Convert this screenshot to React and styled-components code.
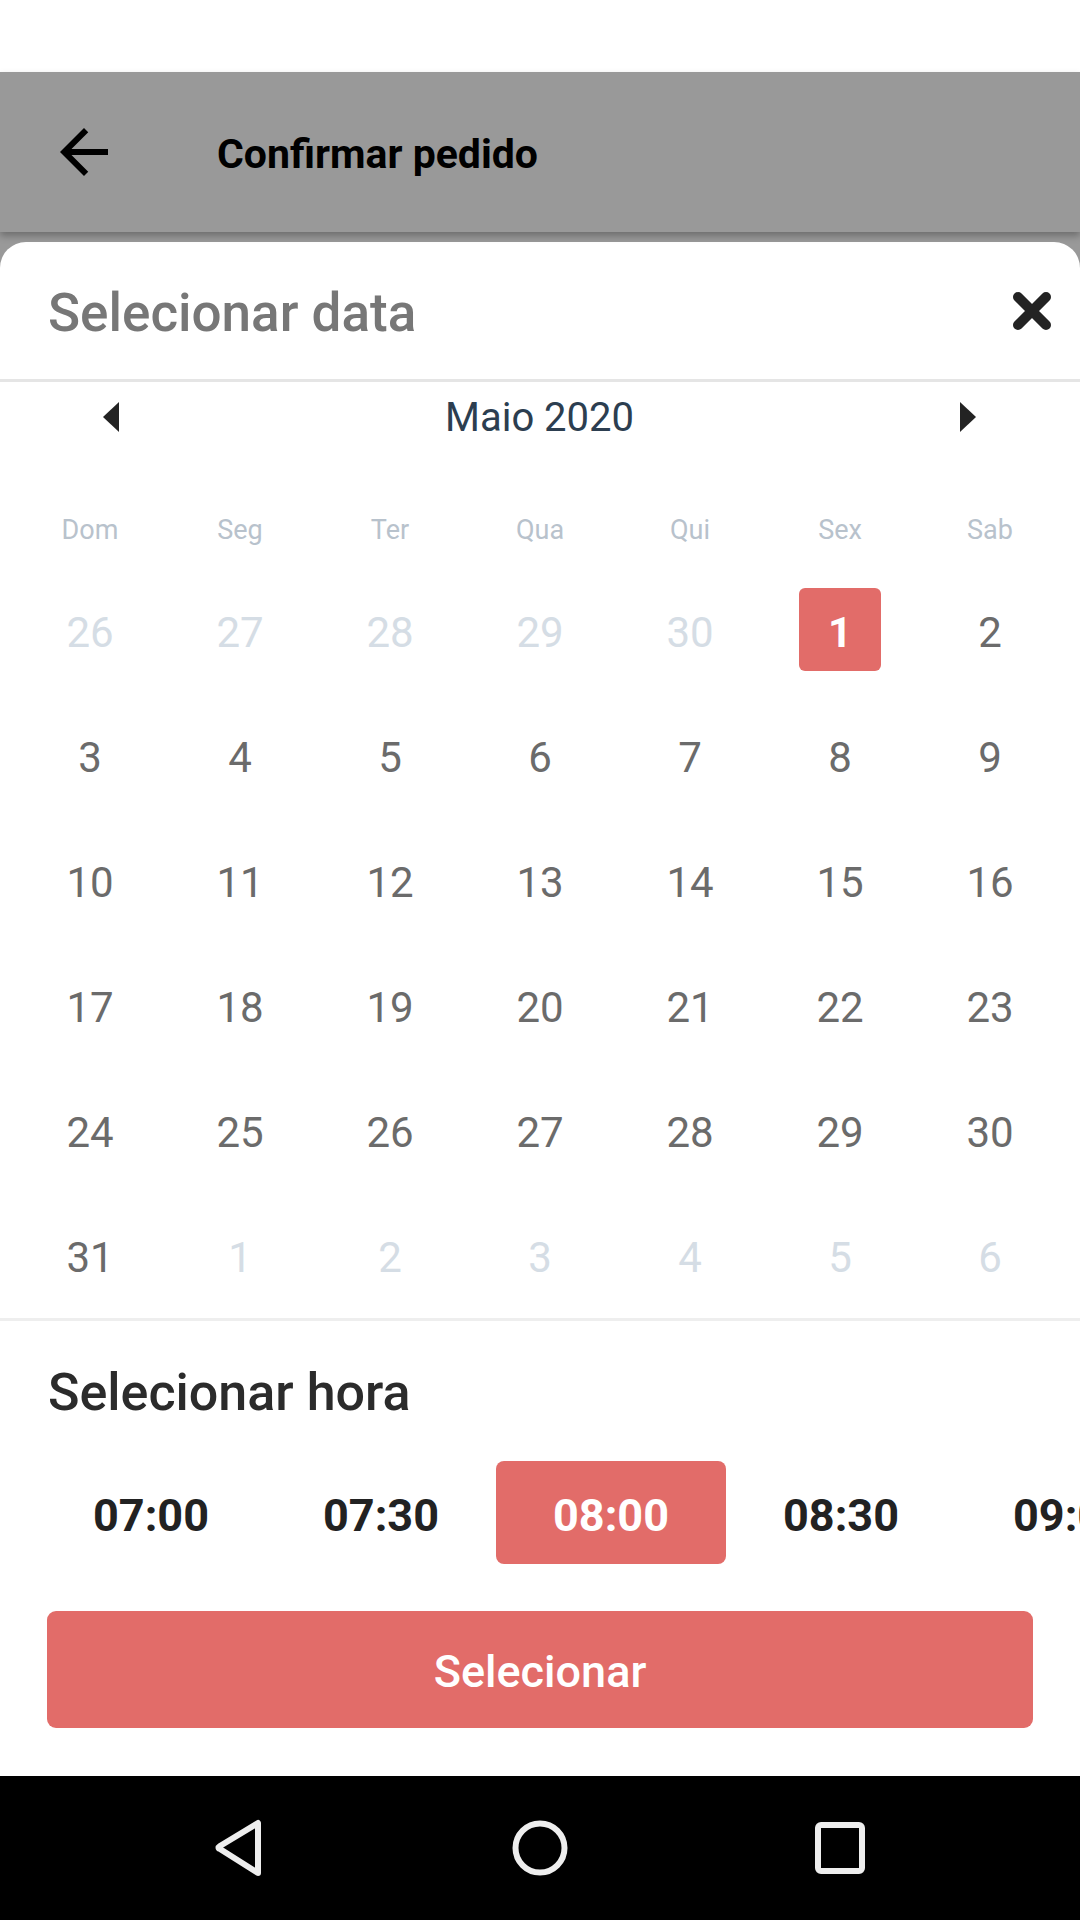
import React from "react"
import styled, { createGlobalStyle } from "styled-components"

const GlobalStyle = createGlobalStyle`
  html, body {
    margin: 0;
    padding: 0;
    background: #fff;
  }
  body {
    font-family: Roboto, "Noto Sans", "Liberation Sans", sans-serif;
  }
`

const RED = "#e26c69"

const WEEKDAYS = ["Dom", "Seg", "Ter", "Qua", "Qui", "Sex", "Sab"]

const WEEKS = [
  [[26, 1], [27, 1], [28, 1], [29, 1], [30, 1], [1, 0, 1], [2]],
  [[3], [4], [5], [6], [7], [8], [9]],
  [[10], [11], [12], [13], [14], [15], [16]],
  [[17], [18], [19], [20], [21], [22], [23]],
  [[24], [25], [26], [27], [28], [29], [30]],
  [[31], [1, 1], [2, 1], [3, 1], [4, 1], [5, 1], [6, 1]]
]

const TIMES = ["07:00", "07:30", "08:00", "08:30", "09:00"]

const Screen = styled.div`
  width: 1080px;
  height: 1920px;
  display: flex;
  flex-direction: column;
  overflow: hidden;
`

const StatusBar = styled.div`
  height: 72px;
  background: #fff;
`

const Toolbar = styled.header`
  position: relative;
  z-index: 2;
  height: 160px;
  display: flex;
  align-items: center;
  padding-left: 48px;
  background: #999999;
  box-shadow: 0 4px 7px rgba(0, 0, 0, 0.28);
`

const ToolbarTitle = styled.h1`
  margin: 4px 0 0 97px;
  font-size: 41px;
  font-weight: 700;
  color: #000;
`

const Backdrop = styled.div`
  flex: 1;
  display: flex;
  flex-direction: column;
  padding-top: 10px;
  background: #999999;
`

const Sheet = styled.section`
  flex: 1;
  display: flex;
  flex-direction: column;
  background: #fff;
  border-radius: 26px 26px 0 0;
`

const SheetHeader = styled.div`
  height: 137px;
  display: flex;
  align-items: center;
  justify-content: space-between;
  padding: 0 28px 0 48px;
  border-bottom: 3px solid #e5e5e5;
`

const SheetTitle = styled.h2`
  margin: 5px 0 0;
  font-size: 53px;
  font-weight: 500;
  color: #777777;
`

const MonthNav = styled.div`
  height: 70px;
  display: flex;
  align-items: center;
  justify-content: space-between;
  padding: 0 104px 0 103px;
`

const MonthLabel = styled.span`
  font-size: 40px;
  color: #2c3e50;
`

const Grid = styled.div`
  display: grid;
  grid-template-columns: repeat(7, 150px);
  padding: 0 15px;
`

const WeekdayRow = styled(Grid)`
  margin-top: 36px;
  height: 80px;
  align-items: center;
`

const Weekday = styled.span`
  padding-top: 3px;
  text-align: center;
  font-size: 27px;
  color: #b8c2cc;
`

const DayCell = styled.div`
  height: 125px;
  display: flex;
  align-items: center;
  justify-content: center;
`

const DayNumber = styled.span`
  box-sizing: border-box;
  display: flex;
  align-items: center;
  justify-content: center;
  width: 82px;
  height: 83px;
  margin-top: -3px;
  padding-top: 6px;
  border-radius: 6px;
  font-size: 42px;
  font-weight: ${p => (p.$selected ? 700 : 400)};
  color: ${p => (p.$selected ? "#fff" : p.$muted ? "#d5dde5" : "#6b6b6b")};
  background: ${p => (p.$selected ? RED : "transparent")};
`

const Divider = styled.div`
  height: 3px;
  background: #eeeeee;
`

const TimeSection = styled.div`
  padding-top: 42px;
`

const SectionTitle = styled.h3`
  margin: 0;
  padding-left: 48px;
  font-size: 52px;
  line-height: 60px;
  font-weight: 500;
  color: #2b2b2b;
`

const SlotRow = styled.div`
  margin-top: 38px;
  display: flex;
  padding-left: 36px;
  overflow: hidden;
`

const Slot = styled.div`
  box-sizing: border-box;
  flex: 0 0 230px;
  height: 103px;
  display: flex;
  align-items: center;
  justify-content: center;
  padding-top: 5px;
  border-radius: 8px;
  font-size: 45px;
  font-weight: 700;
  color: ${p => (p.$active ? "#fff" : "#222")};
  background: ${p => (p.$active ? RED : "transparent")};
`

const SubmitButton = styled.button`
  display: block;
  margin: 47px 47px 0;
  padding-top: 5px;
  height: 117px;
  width: 986px;
  border: none;
  border-radius: 9px;
  background: ${RED};
  color: #fff;
  font-family: inherit;
  font-size: 45px;
  font-weight: 500;
`

const NavBar = styled.nav`
  height: 144px;
  background: #000;
  display: flex;
  align-items: center;
  justify-content: center;
`

const NavItem = styled.div`
  width: 300px;
  display: flex;
  justify-content: center;
`

function BackArrow() {
  return (
    <svg width="72" height="72" viewBox="0 0 24 24">
      <path d="M20 11H7.83l5.59-5.59L12 4l-8 8 8 8 1.41-1.41L7.83 13H20v-2z" fill="#000" />
    </svg>
  )
}

function CloseIcon() {
  return (
    <svg width="40" height="40" viewBox="0 0 40 40">
      <path d="M6 6L34 34M34 6L6 34" stroke="#232323" strokeWidth="10" strokeLinecap="round" />
    </svg>
  )
}

function Caret({ dir }) {
  return (
    <svg width="16" height="30" viewBox="0 0 16 30">
      {dir === "left" ? <polygon points="16,0 16,30 0,15" fill="#232323" /> : <polygon points="0,0 0,30 16,15" fill="#232323" />}
    </svg>
  )
}

export default function App() {
  return (
    <Screen>
      <GlobalStyle />
      <StatusBar />
      <Toolbar>
        <BackArrow />
        <ToolbarTitle>Confirmar pedido</ToolbarTitle>
      </Toolbar>
      <Backdrop>
        <Sheet>
          <SheetHeader>
            <SheetTitle>Selecionar data</SheetTitle>
            <CloseIcon />
          </SheetHeader>

          <MonthNav>
            <Caret dir="left" />
            <MonthLabel>Maio 2020</MonthLabel>
            <Caret dir="right" />
          </MonthNav>

          <WeekdayRow>
            {WEEKDAYS.map(d => (
              <Weekday key={d}>{d}</Weekday>
            ))}
          </WeekdayRow>

          {WEEKS.map((week, i) => (
            <Grid key={i}>
              {week.map(([n, muted, selected], j) => (
                <DayCell key={j}>
                  <DayNumber $muted={!!muted} $selected={!!selected}>
                    {n}
                  </DayNumber>
                </DayCell>
              ))}
            </Grid>
          ))}

          <Divider />

          <TimeSection>
            <SectionTitle>Selecionar hora</SectionTitle>
            <SlotRow>
              {TIMES.map(t => (
                <Slot key={t} $active={t === "08:00"}>
                  {t}
                </Slot>
              ))}
            </SlotRow>
            <SubmitButton>Selecionar</SubmitButton>
          </TimeSection>
        </Sheet>
      </Backdrop>
      <NavBar>
        <NavItem>
          <svg width="56" height="60" viewBox="0 0 56 60">
            <path d="M46 5 L46 55 L8 31 Q5 30 8 28 Z" fill="none" stroke="#eee" strokeWidth="6" strokeLinejoin="round" />
          </svg>
        </NavItem>
        <NavItem>
          <svg width="60" height="60" viewBox="0 0 60 60">
            <circle cx="30" cy="30" r="24.5" fill="none" stroke="#eee" strokeWidth="6" />
          </svg>
        </NavItem>
        <NavItem>
          <svg width="54" height="54" viewBox="0 0 54 54">
            <rect x="5" y="4" width="44" height="46" rx="3" fill="none" stroke="#eee" strokeWidth="6" />
          </svg>
        </NavItem>
      </NavBar>
    </Screen>
  )
}
